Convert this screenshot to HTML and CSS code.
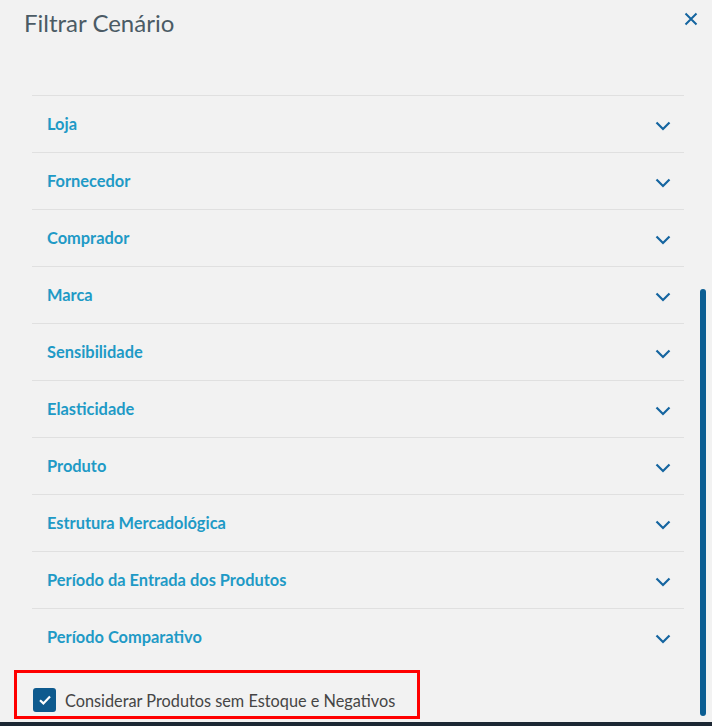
FILE: index.html
```html
<!DOCTYPE html>
<html lang="pt-BR">
<head>
<meta charset="utf-8">
<title>Filtrar Cenário</title>
<link rel="stylesheet" href="styles.css">
</head>
<body>
<div class="modal">
  <header class="modal-header">
    <h1 class="modal-title">Filtrar Cenário</h1>
    <button class="close-btn" aria-label="Fechar">
      <svg width="14" height="14" viewBox="0 0 14 14"><path d="M1.5 1.5 L12.5 12.5 M12.5 1.5 L1.5 12.5" stroke="currentColor" stroke-width="2" fill="none"/></svg>
    </button>
  </header>
  <div class="modal-body">
    <ul class="accordion">
      <li class="acc-item"><span class="acc-label">Loja</span><svg class="chev" width="16" height="10" viewBox="0 0 16 10"><path d="M1.5 1.5 L8 8 L14.5 1.5" stroke="currentColor" stroke-width="2.2" fill="none"/></svg></li>
      <li class="acc-item"><span class="acc-label">Fornecedor</span><svg class="chev" width="16" height="10" viewBox="0 0 16 10"><path d="M1.5 1.5 L8 8 L14.5 1.5" stroke="currentColor" stroke-width="2.2" fill="none"/></svg></li>
      <li class="acc-item"><span class="acc-label">Comprador</span><svg class="chev" width="16" height="10" viewBox="0 0 16 10"><path d="M1.5 1.5 L8 8 L14.5 1.5" stroke="currentColor" stroke-width="2.2" fill="none"/></svg></li>
      <li class="acc-item"><span class="acc-label">Marca</span><svg class="chev" width="16" height="10" viewBox="0 0 16 10"><path d="M1.5 1.5 L8 8 L14.5 1.5" stroke="currentColor" stroke-width="2.2" fill="none"/></svg></li>
      <li class="acc-item"><span class="acc-label">Sensibilidade</span><svg class="chev" width="16" height="10" viewBox="0 0 16 10"><path d="M1.5 1.5 L8 8 L14.5 1.5" stroke="currentColor" stroke-width="2.2" fill="none"/></svg></li>
      <li class="acc-item"><span class="acc-label">Elasticidade</span><svg class="chev" width="16" height="10" viewBox="0 0 16 10"><path d="M1.5 1.5 L8 8 L14.5 1.5" stroke="currentColor" stroke-width="2.2" fill="none"/></svg></li>
      <li class="acc-item"><span class="acc-label">Produto</span><svg class="chev" width="16" height="10" viewBox="0 0 16 10"><path d="M1.5 1.5 L8 8 L14.5 1.5" stroke="currentColor" stroke-width="2.2" fill="none"/></svg></li>
      <li class="acc-item"><span class="acc-label">Estrutura Mercadológica</span><svg class="chev" width="16" height="10" viewBox="0 0 16 10"><path d="M1.5 1.5 L8 8 L14.5 1.5" stroke="currentColor" stroke-width="2.2" fill="none"/></svg></li>
      <li class="acc-item"><span class="acc-label">Período da Entrada dos Produtos</span><svg class="chev" width="16" height="10" viewBox="0 0 16 10"><path d="M1.5 1.5 L8 8 L14.5 1.5" stroke="currentColor" stroke-width="2.2" fill="none"/></svg></li>
      <li class="acc-item"><span class="acc-label">Período Comparativo</span><svg class="chev" width="16" height="10" viewBox="0 0 16 10"><path d="M1.5 1.5 L8 8 L14.5 1.5" stroke="currentColor" stroke-width="2.2" fill="none"/></svg></li>
    </ul>
    <div class="check-wrap">
      <label class="check-row">
        <span class="checkbox"><svg width="14" height="12" viewBox="0 0 14 12"><path d="M2 6.2 L5.4 9.4 L12 2.6" stroke="#fff" stroke-width="2.2" fill="none"/></svg></span>
        <span class="check-text">Considerar Produtos sem Estoque e Negativos</span>
      </label>
    </div>
    <div class="scroll-thumb"></div>
  </div>
  <div class="bottom-bar"></div>
</div>
</body>
</html>
```
FILE: styles.css
```css
html, body {
  margin: 0;
  padding: 0;
  background: #f2f2f2;
}
body {
  font-family: "Lato", "Open Sans", sans-serif;
  width: 712px;
  height: 726px;
  overflow: hidden;
}
.modal {
  position: relative;
  height: 726px;
  display: flex;
  flex-direction: column;
}
.modal-header {
  display: flex;
  justify-content: space-between;
  align-items: flex-start;
  padding: 7px 14px 0 24px;
  height: 95px;
  box-sizing: border-box;
}
.modal-title {
  margin: 0;
  font-size: 24px;
  line-height: 32px;
  font-weight: 400;
  color: #4b5b65;
}
.close-btn {
  border: none;
  background: none;
  padding: 0;
  margin-top: 5px;
  width: 14px;
  height: 14px;
  color: #1565a0;
  display: flex;
}
.modal-body {
  position: relative;
  flex: 1;
}
.accordion {
  list-style: none;
  margin: 0 28px 0 32px;
  padding: 0;
}
.acc-item {
  display: flex;
  align-items: center;
  justify-content: space-between;
  height: 56px;
  border-top: 1px solid #e0e0e0;
  padding: 0 13px 0 15px;
}
.acc-label {
  font-size: 16.4px;
  font-weight: 700;
  color: #1f9ac6;
  margin-top: -2px;
}
.chev {
  color: #1565a0;
  margin-top: 4px;
}
.check-wrap {
  margin: 5px 0 0 14px;
  width: max-content;
  border: 3px solid #ff0000;
  padding: 15px 22px 4px 16px;
}
.check-row {
  display: flex;
  align-items: center;
  gap: 9px;
}
.checkbox {
  width: 23px;
  height: 24px;
  border-radius: 3px;
  background: #0e5a8e;
  display: flex;
  align-items: center;
  justify-content: center;
}
.check-text {
  font-size: 16.3px;
  color: #454545;
}
.scroll-thumb {
  position: absolute;
  right: 6px;
  top: 194px;
  width: 6px;
  height: 427px;
  border-radius: 3px;
  background: #0b5e93;
}
.bottom-bar {
  position: absolute;
  left: 0;
  right: 0;
  bottom: 0;
  height: 4px;
  background: #1c2733;
}
```
